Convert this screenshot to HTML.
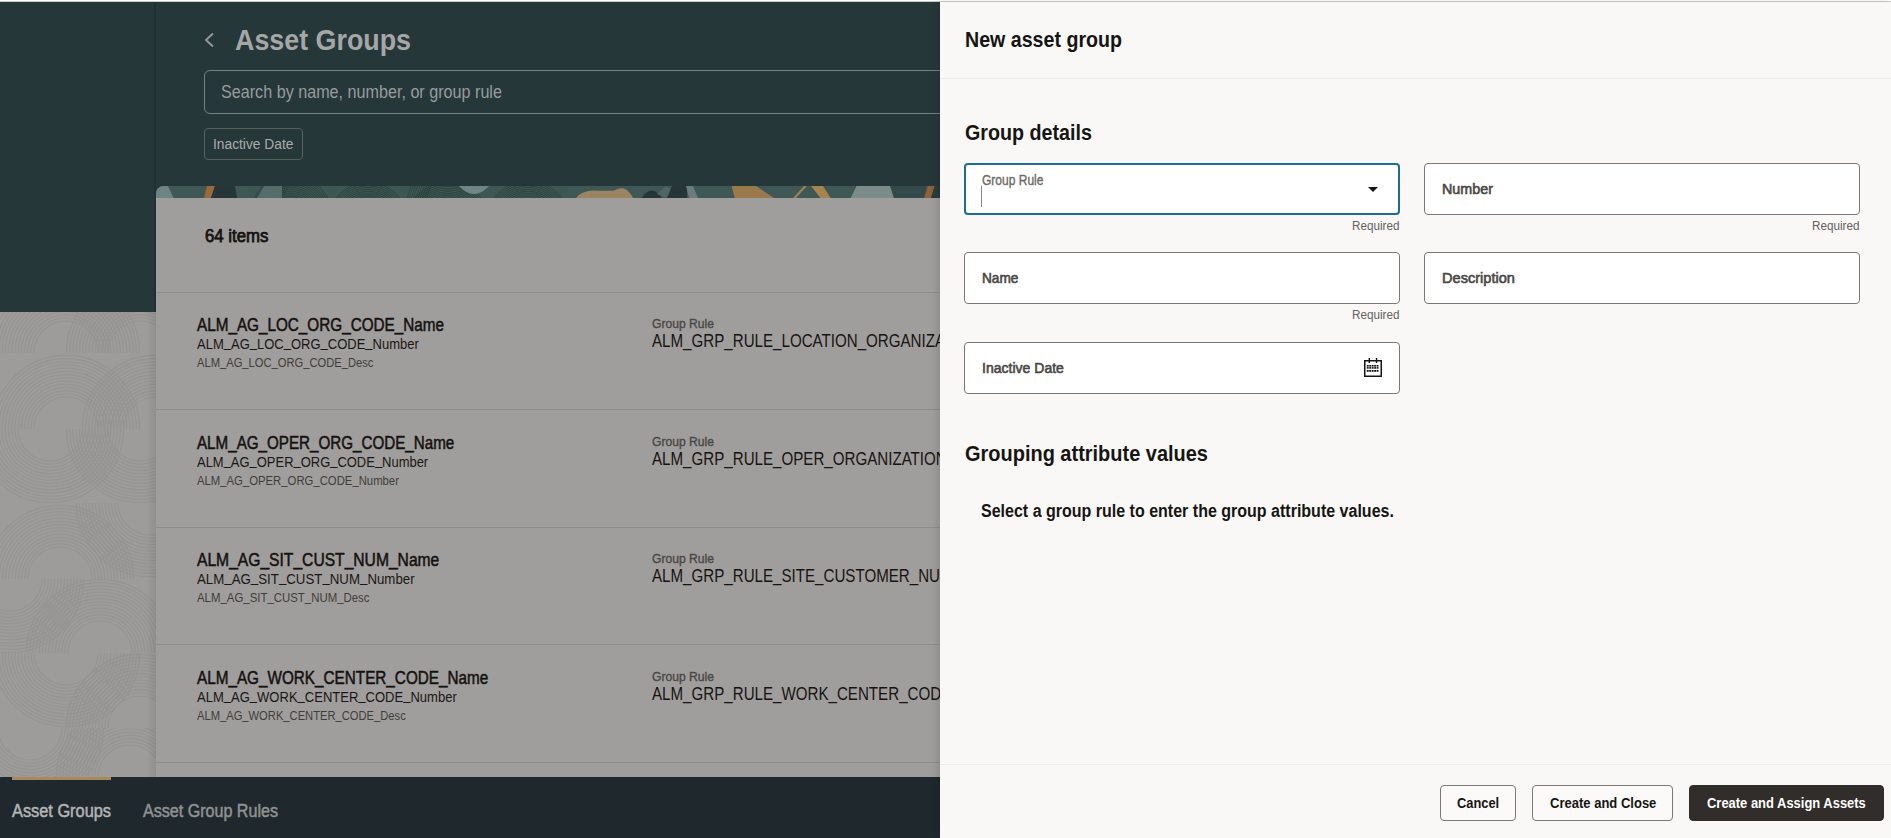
<!DOCTYPE html>
<html><head><meta charset="utf-8">
<style>
*{box-sizing:border-box;margin:0;padding:0}
html,body{width:1891px;height:838px;overflow:hidden;font-family:"Liberation Sans",sans-serif;background:#26373a;position:relative}
.abs{position:absolute}
.t{position:absolute;white-space:nowrap;line-height:1;transform-origin:0 0}
.u{position:relative;top:-0.09em}
#top{left:0;top:0;width:1891px;height:2px;background:#fff;border-bottom:1px solid #cbcbcb}
#hdrcol{left:154px;top:2px;width:2px;height:310px;background:#213033}
#leftpat{left:0;top:312px;width:156px;height:465px;background:#9e9c9a;overflow:hidden}
#card{left:156px;top:186px;width:784px;height:591px;background:#a09e9c;border-top-left-radius:8px;overflow:hidden}
#strip{left:0;top:0;width:784px;height:12px;background:#4b6563;overflow:hidden}
#nav{left:0;top:777px;width:940px;height:61px;background:#1f292d}
#drawer{left:940px;top:2px;width:951px;height:836px;background:#f9f8f6;box-shadow:-3px 0 8px rgba(0,0,0,0.12)}
.div{position:absolute;left:0;width:784px;height:1px;background:#8f8d8a}
.fld{position:absolute;background:#fff;border:1px solid #7b7874;border-radius:4px}
.btn{position:absolute;top:785px;height:36px;border:1px solid #7b7874;border-radius:4px;background:#fbfaf8}
#lclip{position:absolute;left:0;top:0;width:940px;height:838px;overflow:hidden}
</style></head>
<body>
<div class="abs" id="top"></div>
<div class="abs" id="hdrcol"></div>

<div id="lclip">
<!-- header content -->
<svg class="abs" style="left:203px;top:32px" width="12" height="16" viewBox="0 0 12 16"><path d="M10 1.5 L3 8 L10 14.5" fill="none" stroke="#9a9c9c" stroke-width="1.8"/></svg>
<div class="abs" style="left:204px;top:70px;width:760px;height:44px;border:1px solid #76817f;border-radius:6px"></div>
<div class="abs" style="left:204px;top:128px;width:99px;height:32px;border:1px solid #56625f;border-radius:4px"></div>

<!-- left pattern -->
<div class="abs" id="leftpat">
<svg width="156" height="465" style="position:absolute;left:0;top:0" fill="none" stroke="#8b8987" stroke-width="1.1" opacity="0.4">
<defs><clipPath id="lp0"><rect x="0" y="0" width="156" height="41"/></clipPath><clipPath id="lp1"><rect x="0" y="0" width="156" height="41"/></clipPath><clipPath id="lp2"><rect x="0" y="41" width="156" height="76"/></clipPath><clipPath id="lp3"><rect x="0" y="41" width="156" height="76"/></clipPath><clipPath id="lp4"><rect x="0" y="117" width="156" height="74"/></clipPath><clipPath id="lp5"><rect x="0" y="117" width="156" height="74"/></clipPath><clipPath id="lp6"><rect x="0" y="191" width="156" height="76"/></clipPath><clipPath id="lp7"><rect x="0" y="191" width="156" height="76"/></clipPath><clipPath id="lp8"><rect x="0" y="267" width="156" height="74"/></clipPath><clipPath id="lp9"><rect x="0" y="267" width="156" height="74"/></clipPath><clipPath id="lp10"><rect x="0" y="341" width="156" height="75"/></clipPath><clipPath id="lp11"><rect x="0" y="341" width="156" height="75"/></clipPath><clipPath id="lp12"><rect x="0" y="416" width="156" height="49"/></clipPath><clipPath id="lp13"><rect x="0" y="416" width="156" height="49"/></clipPath></defs><g clip-path="url(#lp0)"><g transform="translate(66,41)"><circle r="32.0"/><circle r="35.2"/><circle r="38.4"/><circle r="41.6"/><circle r="44.8"/><circle r="48.0"/><circle r="51.2"/><circle r="54.4"/><circle r="57.6"/><circle r="60.8"/><circle r="64.0"/><circle r="67.2"/><circle r="70.4"/><circle r="73.6"/></g></g>
<g clip-path="url(#lp1)"><g transform="translate(140,41)"><circle r="32.0"/><circle r="35.2"/><circle r="38.4"/><circle r="41.6"/><circle r="44.8"/><circle r="48.0"/><circle r="51.2"/><circle r="54.4"/><circle r="57.6"/><circle r="60.8"/><circle r="64.0"/><circle r="67.2"/><circle r="70.4"/><circle r="73.6"/></g></g>
<g clip-path="url(#lp2)"><g transform="translate(66,117)"><circle r="32.0"/><circle r="35.2"/><circle r="38.4"/><circle r="41.6"/><circle r="44.8"/><circle r="48.0"/><circle r="51.2"/><circle r="54.4"/><circle r="57.6"/><circle r="60.8"/><circle r="64.0"/><circle r="67.2"/><circle r="70.4"/><circle r="73.6"/></g></g>
<g clip-path="url(#lp3)"><g transform="translate(156,117)"><circle r="32.0"/><circle r="35.2"/><circle r="38.4"/><circle r="41.6"/><circle r="44.8"/><circle r="48.0"/><circle r="51.2"/><circle r="54.4"/><circle r="57.6"/><circle r="60.8"/><circle r="64.0"/><circle r="67.2"/><circle r="70.4"/><circle r="73.6"/></g></g>
<g clip-path="url(#lp4)"><g transform="translate(50,117)"><circle r="32.0"/><circle r="35.2"/><circle r="38.4"/><circle r="41.6"/><circle r="44.8"/><circle r="48.0"/><circle r="51.2"/><circle r="54.4"/><circle r="57.6"/><circle r="60.8"/><circle r="64.0"/><circle r="67.2"/><circle r="70.4"/><circle r="73.6"/></g></g>
<g clip-path="url(#lp5)"><g transform="translate(140,117)"><circle r="32.0"/><circle r="35.2"/><circle r="38.4"/><circle r="41.6"/><circle r="44.8"/><circle r="48.0"/><circle r="51.2"/><circle r="54.4"/><circle r="57.6"/><circle r="60.8"/><circle r="64.0"/><circle r="67.2"/><circle r="70.4"/><circle r="73.6"/></g></g>
<g clip-path="url(#lp6)"><g transform="translate(60,267)"><circle r="32.0"/><circle r="35.2"/><circle r="38.4"/><circle r="41.6"/><circle r="44.8"/><circle r="48.0"/><circle r="51.2"/><circle r="54.4"/><circle r="57.6"/><circle r="60.8"/><circle r="64.0"/><circle r="67.2"/><circle r="70.4"/><circle r="73.6"/></g></g>
<g clip-path="url(#lp7)"><g transform="translate(150,191)"><circle r="32.0"/><circle r="35.2"/><circle r="38.4"/><circle r="41.6"/><circle r="44.8"/><circle r="48.0"/><circle r="51.2"/><circle r="54.4"/><circle r="57.6"/><circle r="60.8"/><circle r="64.0"/><circle r="67.2"/><circle r="70.4"/><circle r="73.6"/></g></g>
<g clip-path="url(#lp8)"><g transform="translate(100,341)"><circle r="32.0"/><circle r="35.2"/><circle r="38.4"/><circle r="41.6"/><circle r="44.8"/><circle r="48.0"/><circle r="51.2"/><circle r="54.4"/><circle r="57.6"/><circle r="60.8"/><circle r="64.0"/><circle r="67.2"/><circle r="70.4"/><circle r="73.6"/></g></g>
<g clip-path="url(#lp9)"><g transform="translate(10,267)"><circle r="32.0"/><circle r="35.2"/><circle r="38.4"/><circle r="41.6"/><circle r="44.8"/><circle r="48.0"/><circle r="51.2"/><circle r="54.4"/><circle r="57.6"/><circle r="60.8"/><circle r="64.0"/><circle r="67.2"/><circle r="70.4"/><circle r="73.6"/></g></g>
<g clip-path="url(#lp10)"><g transform="translate(66,341)"><circle r="32.0"/><circle r="35.2"/><circle r="38.4"/><circle r="41.6"/><circle r="44.8"/><circle r="48.0"/><circle r="51.2"/><circle r="54.4"/><circle r="57.6"/><circle r="60.8"/><circle r="64.0"/><circle r="67.2"/><circle r="70.4"/><circle r="73.6"/></g></g>
<g clip-path="url(#lp11)"><g transform="translate(140,416)"><circle r="32.0"/><circle r="35.2"/><circle r="38.4"/><circle r="41.6"/><circle r="44.8"/><circle r="48.0"/><circle r="51.2"/><circle r="54.4"/><circle r="57.6"/><circle r="60.8"/><circle r="64.0"/><circle r="67.2"/><circle r="70.4"/><circle r="73.6"/></g></g>
<g clip-path="url(#lp12)"><g transform="translate(130,465)"><circle r="32.0"/><circle r="35.2"/><circle r="38.4"/><circle r="41.6"/><circle r="44.8"/><circle r="48.0"/><circle r="51.2"/><circle r="54.4"/><circle r="57.6"/><circle r="60.8"/><circle r="64.0"/><circle r="67.2"/><circle r="70.4"/><circle r="73.6"/></g></g>
<g clip-path="url(#lp13)"><g transform="translate(30,416)"><circle r="32.0"/><circle r="35.2"/><circle r="38.4"/><circle r="41.6"/><circle r="44.8"/><circle r="48.0"/><circle r="51.2"/><circle r="54.4"/><circle r="57.6"/><circle r="60.8"/><circle r="64.0"/><circle r="67.2"/><circle r="70.4"/><circle r="73.6"/></g></g>
</svg>
<div class="abs" style="left:146px;top:0;width:10px;height:465px;background:linear-gradient(to right, rgba(0,0,0,0), rgba(0,0,0,0.08))"></div>
</div>

<!-- card -->
<div class="abs" id="card">
  <div class="abs" id="strip">
   <svg width="784" height="12" style="position:absolute;left:0;top:0">
    <defs><clipPath id="cp"><rect x="0" y="0" width="784" height="12"/></clipPath></defs>
    <g clip-path="url(#cp)">
    <rect x="0" y="0" width="784" height="12" fill="#3f5755"/>
    <g fill="none" stroke="#22302f" stroke-width="0.7" opacity="0.7"><g transform="translate(135,30)"><circle r="14.0"/><circle r="15.8"/><circle r="17.6"/><circle r="19.4"/><circle r="21.2"/><circle r="23.0"/><circle r="24.8"/><circle r="26.6"/><circle r="28.4"/><circle r="30.2"/><circle r="32.0"/><circle r="33.8"/><circle r="35.6"/><circle r="37.4"/><circle r="39.2"/><circle r="41.0"/></g><g transform="translate(212,36)"><circle r="20.0"/><circle r="21.8"/><circle r="23.6"/><circle r="25.4"/><circle r="27.2"/><circle r="29.0"/><circle r="30.8"/><circle r="32.6"/><circle r="34.4"/><circle r="36.2"/><circle r="38.0"/><circle r="39.8"/></g><g transform="translate(292,40)"><circle r="20.0"/><circle r="21.8"/><circle r="23.6"/><circle r="25.4"/><circle r="27.2"/><circle r="29.0"/><circle r="30.8"/><circle r="32.6"/><circle r="34.4"/><circle r="36.2"/><circle r="38.0"/><circle r="39.8"/><circle r="41.6"/><circle r="43.4"/></g><g transform="translate(372,36)"><circle r="20.0"/><circle r="21.8"/><circle r="23.6"/><circle r="25.4"/><circle r="27.2"/><circle r="29.0"/><circle r="30.8"/><circle r="32.6"/><circle r="34.4"/><circle r="36.2"/><circle r="38.0"/><circle r="39.8"/><circle r="41.6"/></g></g><g stroke="#22302f" stroke-width="0.7" opacity="0.6"><line x1="108.0" y1="0" x2="102.0" y2="12"/><line x1="110.2" y1="0" x2="104.2" y2="12"/><line x1="112.4" y1="0" x2="106.4" y2="12"/><line x1="114.6" y1="0" x2="108.6" y2="12"/><line x1="116.8" y1="0" x2="110.8" y2="12"/><line x1="119.0" y1="0" x2="113.0" y2="12"/><line x1="121.2" y1="0" x2="115.2" y2="12"/><line x1="123.4" y1="0" x2="117.4" y2="12"/><line x1="125.6" y1="0" x2="119.6" y2="12"/><line x1="127.8" y1="0" x2="121.8" y2="12"/><line x1="130.0" y1="0" x2="124.0" y2="12"/><line x1="132.2" y1="0" x2="126.2" y2="12"/><line x1="255.0" y1="0" x2="251.0" y2="12"/><line x1="257.2" y1="0" x2="253.2" y2="12"/><line x1="259.4" y1="0" x2="255.4" y2="12"/><line x1="261.6" y1="0" x2="257.6" y2="12"/><line x1="263.8" y1="0" x2="259.8" y2="12"/><line x1="266.0" y1="0" x2="262.0" y2="12"/><line x1="268.2" y1="0" x2="264.2" y2="12"/><line x1="270.4" y1="0" x2="266.4" y2="12"/><line x1="272.6" y1="0" x2="268.6" y2="12"/><line x1="274.8" y1="0" x2="270.8" y2="12"/></g>
    <path d="M0,12 V4 Q0,0 4,0 H12 L17.5,12 Z" fill="#6e8383"/>
    <polygon points="51,0 59,0 55,12 48,12" fill="#9a6a3c"/>
    <polygon points="59,0 79,0 81,12 55,12" fill="#263538"/>
    <polygon points="108,0 126,0 126,12 101,12" fill="#5f7675" opacity="0.8"/>
    <path d="M303,0 Q318,16 333,0 Z" fill="#6f8586"/>
    <path d="M420,12 Q425,5 437,4.5 Q452,5 458,4.5 Q464,1.5 468,2.5 Q474,5 477,12 Z" fill="#9a8462"/>
    <path d="M485.7,12 Q495.7,-3 505.8,12 Z" fill="#263538"/>
    <polygon points="501,8 510,0 516,4 511,12" fill="#4e6764"/>
    <polygon points="516,0 531,0 531,12 511,12" fill="#263538"/>
    <polygon points="530,0 537,0 542,12 533,12" fill="#6a7c7e"/>
    <polygon points="575.6,0 600,0 618,12 578.7,12" fill="#9a7a4c"/>
    <polygon points="648,0 651,0 640,12 637,12" fill="#a08050"/>
    <polygon points="655,0 667,0 674.6,12 664.5,12" fill="#a6844f"/>
    <polygon points="700.5,0 733.8,0 738,12 694.7,12" fill="#7b8c8b"/>
    <polygon points="735,0 770,0 770,12 738,12" fill="#34494a"/>
    <polygon points="771.9,0 778.7,0 775,12 768,12" fill="#8d6139"/>
    <polygon points="778.7,0 784,0 784,12 775,12" fill="#2a3c3e"/>
    </g>
   </svg>
  </div>
  <div class="div" style="top:106px"></div>
  <div class="div" style="top:223px"></div>
  <div class="div" style="top:341px"></div>
  <div class="div" style="top:458px"></div>
  <div class="div" style="top:576px"></div>
</div>

<div class="t" style="left:235px;top:25.86px;font-size:29.22px;font-weight:bold;color:#a5a6a6;transform:scaleX(0.9187);">Asset Groups</div>
<div class="t" style="left:221px;top:84.23px;font-size:17.44px;font-weight:normal;color:#979c9c;transform:scaleX(0.9260);">Search by name, number, or group rule</div>
<div class="t" style="left:213px;top:136.69px;font-size:14.53px;font-weight:normal;color:#a9abab;transform:scaleX(0.9489);">Inactive Date</div>
<div class="t" style="left:204.5px;top:228.23px;font-size:17.44px;font-weight:normal;color:#141210;transform:scaleX(0.9633);-webkit-text-stroke:0.75px #141210;">64 items</div>
<div class="t" style="left:196.5px;top:317.23px;font-size:17.44px;font-weight:normal;color:#141210;transform:scaleX(0.8757);-webkit-text-stroke:0.5px #141210;">ALM<span class="u">_</span>AG<span class="u">_</span>LOC<span class="u">_</span>ORG<span class="u">_</span>CODE<span class="u">_</span>Name</div>
<div class="t" style="left:196.5px;top:336.69px;font-size:14.53px;font-weight:normal;color:#191715;transform:scaleX(0.8952);">ALM<span class="u">_</span>AG<span class="u">_</span>LOC<span class="u">_</span>ORG<span class="u">_</span>CODE<span class="u">_</span>Number</div>
<div class="t" style="left:196.5px;top:355.92px;font-size:13.08px;font-weight:normal;color:#3f3d3a;transform:scaleX(0.8539);">ALM<span class="u">_</span>AG<span class="u">_</span>LOC<span class="u">_</span>ORG<span class="u">_</span>CODE<span class="u">_</span>Desc</div>
<div class="t" style="left:652px;top:316.92px;font-size:13.08px;font-weight:normal;color:#4b4946;transform:scaleX(0.9268);-webkit-text-stroke:0.4px #4b4946;">Group Rule</div>
<div class="t" style="left:652px;top:333.23px;font-size:17.44px;font-weight:normal;color:#161412;transform:scaleX(0.8673);">ALM<span class="u">_</span>GRP<span class="u">_</span>RULE<span class="u">_</span>LOCATION<span class="u">_</span>ORGANIZATION</div>
<div class="t" style="left:196.5px;top:435.23px;font-size:17.44px;font-weight:normal;color:#141210;transform:scaleX(0.8703);-webkit-text-stroke:0.5px #141210;">ALM<span class="u">_</span>AG<span class="u">_</span>OPER<span class="u">_</span>ORG<span class="u">_</span>CODE<span class="u">_</span>Name</div>
<div class="t" style="left:196.5px;top:454.69px;font-size:14.53px;font-weight:normal;color:#191715;transform:scaleX(0.8924);">ALM<span class="u">_</span>AG<span class="u">_</span>OPER<span class="u">_</span>ORG<span class="u">_</span>CODE<span class="u">_</span>Number</div>
<div class="t" style="left:196.5px;top:473.92px;font-size:13.08px;font-weight:normal;color:#3f3d3a;transform:scaleX(0.8652);">ALM<span class="u">_</span>AG<span class="u">_</span>OPER<span class="u">_</span>ORG<span class="u">_</span>CODE<span class="u">_</span>Number</div>
<div class="t" style="left:652px;top:434.92px;font-size:13.08px;font-weight:normal;color:#4b4946;transform:scaleX(0.9268);-webkit-text-stroke:0.4px #4b4946;">Group Rule</div>
<div class="t" style="left:652px;top:451.23px;font-size:17.44px;font-weight:normal;color:#161412;transform:scaleX(0.8673);">ALM<span class="u">_</span>GRP<span class="u">_</span>RULE<span class="u">_</span>OPER<span class="u">_</span>ORGANIZATION</div>
<div class="t" style="left:196.5px;top:552.23px;font-size:17.44px;font-weight:normal;color:#141210;transform:scaleX(0.8960);-webkit-text-stroke:0.5px #141210;">ALM<span class="u">_</span>AG<span class="u">_</span>SIT<span class="u">_</span>CUST<span class="u">_</span>NUM<span class="u">_</span>Name</div>
<div class="t" style="left:196.5px;top:571.69px;font-size:14.53px;font-weight:normal;color:#191715;transform:scaleX(0.9141);">ALM<span class="u">_</span>AG<span class="u">_</span>SIT<span class="u">_</span>CUST<span class="u">_</span>NUM<span class="u">_</span>Number</div>
<div class="t" style="left:196.5px;top:590.92px;font-size:13.08px;font-weight:normal;color:#3f3d3a;transform:scaleX(0.8724);">ALM<span class="u">_</span>AG<span class="u">_</span>SIT<span class="u">_</span>CUST<span class="u">_</span>NUM<span class="u">_</span>Desc</div>
<div class="t" style="left:652px;top:551.92px;font-size:13.08px;font-weight:normal;color:#4b4946;transform:scaleX(0.9268);-webkit-text-stroke:0.4px #4b4946;">Group Rule</div>
<div class="t" style="left:652px;top:568.23px;font-size:17.44px;font-weight:normal;color:#161412;transform:scaleX(0.8673);">ALM<span class="u">_</span>GRP<span class="u">_</span>RULE<span class="u">_</span>SITE<span class="u">_</span>CUSTOMER<span class="u">_</span>NUMBER</div>
<div class="t" style="left:196.5px;top:670.23px;font-size:17.44px;font-weight:normal;color:#141210;transform:scaleX(0.8762);-webkit-text-stroke:0.5px #141210;">ALM<span class="u">_</span>AG<span class="u">_</span>WORK<span class="u">_</span>CENTER<span class="u">_</span>CODE<span class="u">_</span>Name</div>
<div class="t" style="left:196.5px;top:689.69px;font-size:14.53px;font-weight:normal;color:#191715;transform:scaleX(0.8967);">ALM<span class="u">_</span>AG<span class="u">_</span>WORK<span class="u">_</span>CENTER<span class="u">_</span>CODE<span class="u">_</span>Number</div>
<div class="t" style="left:196.5px;top:708.92px;font-size:13.08px;font-weight:normal;color:#3f3d3a;transform:scaleX(0.8545);">ALM<span class="u">_</span>AG<span class="u">_</span>WORK<span class="u">_</span>CENTER<span class="u">_</span>CODE<span class="u">_</span>Desc</div>
<div class="t" style="left:652px;top:669.92px;font-size:13.08px;font-weight:normal;color:#4b4946;transform:scaleX(0.9268);-webkit-text-stroke:0.4px #4b4946;">Group Rule</div>
<div class="t" style="left:652px;top:686.23px;font-size:17.44px;font-weight:normal;color:#161412;transform:scaleX(0.8673);">ALM<span class="u">_</span>GRP<span class="u">_</span>RULE<span class="u">_</span>WORK<span class="u">_</span>CENTER<span class="u">_</span>CODE</div>

<!-- nav -->
<div class="abs" id="nav"></div>
<div class="abs" style="left:12px;top:777px;width:99px;height:3px;background:#a68a5c"></div>
</div>
<div class="t" style="left:12px;top:802.73px;font-size:17.44px;font-weight:normal;color:#b4b5b5;transform:scaleX(0.9369);-webkit-text-stroke:0.5px #b4b5b5;">Asset Groups</div>
<div class="t" style="left:143px;top:802.73px;font-size:17.44px;font-weight:normal;color:#8f9292;transform:scaleX(0.9222);-webkit-text-stroke:0.5px #8f9292;">Asset Group Rules</div>

<!-- drawer -->
<div class="abs" id="drawer"></div>
<div class="abs" style="left:940px;top:78px;width:951px;height:1px;background:#eeedea"></div>

<div class="fld" style="left:964px;top:163px;width:436px;height:52px;border:2px solid #1f6d92"></div>
<div class="abs" style="left:981px;top:186px;width:1px;height:21px;background:#8a8884"></div>
<svg class="abs" style="left:1367px;top:186px" width="12" height="8" viewBox="0 0 12 8"><path d="M1 1 H11 L6 6 Z" fill="#161513"/></svg>

<div class="fld" style="left:1424px;top:163px;width:436px;height:52px"></div>
<div class="fld" style="left:964px;top:252px;width:436px;height:52px"></div>
<div class="fld" style="left:1424px;top:252px;width:436px;height:52px"></div>
<div class="fld" style="left:964px;top:342px;width:436px;height:52px"></div>
<svg class="abs" style="left:1363px;top:357px" width="20" height="21" viewBox="0 0 20 21">
 <rect x="1.75" y="3.75" width="16.5" height="15.5" fill="none" stroke="#161513" stroke-width="1.5"/>
 <line x1="6.3" y1="1" x2="6.3" y2="6" stroke="#161513" stroke-width="1.4"/>
 <line x1="13.5" y1="1" x2="13.5" y2="6" stroke="#161513" stroke-width="1.4"/>
 <g fill="#161513"><rect x="3.80" y="8" width="1.9" height="1.6"/><rect x="3.80" y="10.1" width="1.9" height="1.6"/><rect x="3.80" y="13" width="1.9" height="1.8"/><rect x="6.25" y="8" width="1.9" height="1.6"/><rect x="6.25" y="10.1" width="1.9" height="1.6"/><rect x="6.25" y="13" width="1.9" height="1.8"/><rect x="8.70" y="8" width="1.9" height="1.6"/><rect x="8.70" y="10.1" width="1.9" height="1.6"/><rect x="8.70" y="13" width="1.9" height="1.8"/><rect x="11.15" y="8" width="1.9" height="1.6"/><rect x="11.15" y="10.1" width="1.9" height="1.6"/><rect x="11.15" y="13" width="1.9" height="1.8"/><rect x="13.60" y="8" width="1.9" height="1.6"/><rect x="13.60" y="10.1" width="1.9" height="1.6"/><rect x="13.60" y="13" width="1.9" height="1.8"/></g>
</svg>

<div class="abs" style="left:940px;top:764px;width:951px;height:1px;background:#eeedea"></div>
<div class="btn" style="left:1440px;width:76px"></div>
<div class="btn" style="left:1532px;width:141px"></div>
<div class="btn" style="left:1689px;width:195px;background:#312d2a;border-color:#312d2a"></div>

<div class="t" style="left:965px;top:28.54px;font-size:21.80px;font-weight:bold;color:#161513;transform:scaleX(0.8999);">New asset group</div>
<div class="t" style="left:964.5px;top:121.54px;font-size:21.80px;font-weight:bold;color:#161513;transform:scaleX(0.9038);">Group details</div>
<div class="t" style="left:981.5px;top:172.69px;font-size:14.53px;font-weight:normal;color:#6f6c68;transform:scaleX(0.8274);-webkit-text-stroke:0.4px #6f6c68;">Group Rule</div>
<div class="t" style="left:1352px;top:218.92px;font-size:13.08px;font-weight:normal;color:#64615d;transform:scaleX(0.8948);">Required</div>
<div class="t" style="left:1442px;top:181.69px;font-size:14.53px;font-weight:normal;color:#4a4744;transform:scaleX(0.9865);-webkit-text-stroke:0.6px #4a4744;">Number</div>
<div class="t" style="left:1812px;top:218.92px;font-size:13.08px;font-weight:normal;color:#64615d;transform:scaleX(0.8948);">Required</div>
<div class="t" style="left:982px;top:270.69px;font-size:14.53px;font-weight:normal;color:#4a4744;transform:scaleX(0.9414);-webkit-text-stroke:0.6px #4a4744;">Name</div>
<div class="t" style="left:1352px;top:307.92px;font-size:13.08px;font-weight:normal;color:#64615d;transform:scaleX(0.8948);">Required</div>
<div class="t" style="left:1442px;top:270.69px;font-size:14.53px;font-weight:normal;color:#4a4744;transform:scaleX(1.0041);-webkit-text-stroke:0.6px #4a4744;">Description</div>
<div class="t" style="left:982px;top:360.69px;font-size:14.53px;font-weight:normal;color:#4a4744;transform:scaleX(0.9666);-webkit-text-stroke:0.6px #4a4744;">Inactive Date</div>
<div class="t" style="left:964.5px;top:442.54px;font-size:21.80px;font-weight:bold;color:#161513;transform:scaleX(0.9160);">Grouping attribute values</div>
<div class="t" style="left:980.5px;top:503.23px;font-size:17.44px;font-weight:bold;color:#161513;transform:scaleX(0.9184);">Select a group rule to enter the group attribute values.</div>
<div class="t" style="left:1457px;top:795.69px;font-size:14.53px;font-weight:bold;color:#161513;transform:scaleX(0.8854);">Cancel</div>
<div class="t" style="left:1550px;top:795.69px;font-size:14.53px;font-weight:bold;color:#161513;transform:scaleX(0.8969);">Create and Close</div>
<div class="t" style="left:1707px;top:795.69px;font-size:14.53px;font-weight:bold;color:#ffffff;transform:scaleX(0.8922);">Create and Assign Assets</div>
</body></html>
